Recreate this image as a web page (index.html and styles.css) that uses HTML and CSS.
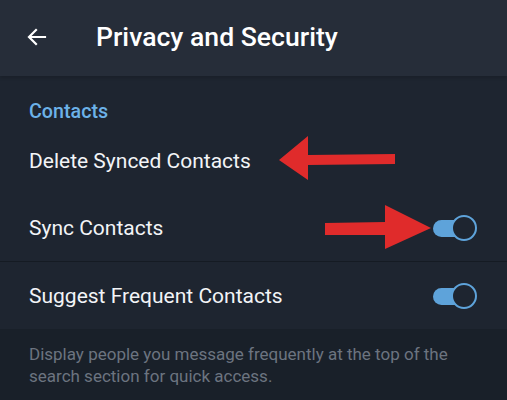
FILE: index.html
```html
<!DOCTYPE html>
<html>
<head>
    <title>Privacy and Security</title>
    <link rel="stylesheet" href="styles.css">
</head>
<body>

<div class="screen">
    <div class="top-bar">
        <svg class="back-icon" width="24" height="24" viewBox="0 0 24 24">
            <path d="M20 12H4.5M11 5l-7 7 7 7" fill="none" stroke="#ffffff" stroke-width="2.2" stroke-linecap="square"/>
        </svg>
        <h1 class="title">Privacy and Security</h1>
    </div>

    <div class="section">
        <div class="section-title">Contacts</div>

        <div class="row">
            <span class="row-label">Delete Synced Contacts</span>
            <svg class="mark mark-left" width="118" height="44" viewBox="0 0 118 44">
                <polygon points="0,24 29,0 29,19 116,18 116,28 29,29 29,44" fill="#e02b2b"/>
            </svg>
        </div>

        <div class="row">
            <span class="row-label">Sync Contacts</span>
            <div class="toggle on"><span class="knob"></span></div>
            <svg class="mark mark-right" width="106" height="44" viewBox="0 0 106 44">
                <polygon points="0,18 60,17 60,0 106,23 60,44 60,30 0,30" fill="#e02b2b"/>
            </svg>
        </div>

        <div class="row last">
            <span class="row-label">Suggest Frequent Contacts</span>
            <div class="toggle on"><span class="knob"></span></div>
        </div>
    </div>

    <div class="info">
        Display people you message frequently at the top of
        the search section for quick access.
    </div>
</div>

</body>
</html>
```

FILE: styles.css
```css
body {
    margin: 0;
    font-family: Roboto, "Liberation Sans", sans-serif;
    background-color: #192029;
}

.screen {
    width: 507px;
    height: 400px;
    overflow: hidden;
}

.top-bar {
    height: 76px;
    display: flex;
    align-items: center;
    background-color: #262d39;
    box-shadow: 0 2px 3px rgba(0, 0, 0, 0.15);
    position: relative;
    z-index: 1;
}

.back-icon {
    margin-left: 25px;
    margin-top: -3px;
}

.title {
    margin: 0 0 0 47px;
    margin-top: -4px;
    color: #ffffff;
    font-size: 26.6px;
    font-weight: 500;
}

.section {
    background-color: #1e2530;
}

.section-title {
    height: 51px;
    padding: 24px 0 0 29px;
    box-sizing: border-box;
    color: #6cb2e8;
    font-size: 19.7px;
    font-weight: 500;
}

.row {
    height: 67px;
    display: flex;
    align-items: center;
    justify-content: space-between;
    padding: 0 30px 0 29px;
    position: relative;
}

.row + .row {
    border-top: 1px solid #151b23;
}

.row:nth-child(2) + .row {
    border-top: none;
}

.row-label {
    color: #f2f4f7;
    font-size: 21px;
}

.toggle {
    width: 44px;
    height: 26px;
    position: relative;
}

.toggle.on::before {
    content: "";
    position: absolute;
    left: 0;
    top: 5px;
    width: 32px;
    height: 17px;
    border-radius: 9px;
    background-color: #5ea3da;
}

.knob {
    position: absolute;
    right: 0;
    top: 0;
    width: 22px;
    height: 22px;
    border-radius: 50%;
    border: 2px solid #5ea3da;
    background-color: #1e2530;
}

.mark {
    position: absolute;
}

.mark-left {
    left: 279px;
    top: 9px;
}

.mark-right {
    left: 325px;
    top: 11px;
}

.info {
    padding: 14px 29px 0 29px;
    color: #6c7480;
    font-size: 17px;
    line-height: 22px;
}
```
